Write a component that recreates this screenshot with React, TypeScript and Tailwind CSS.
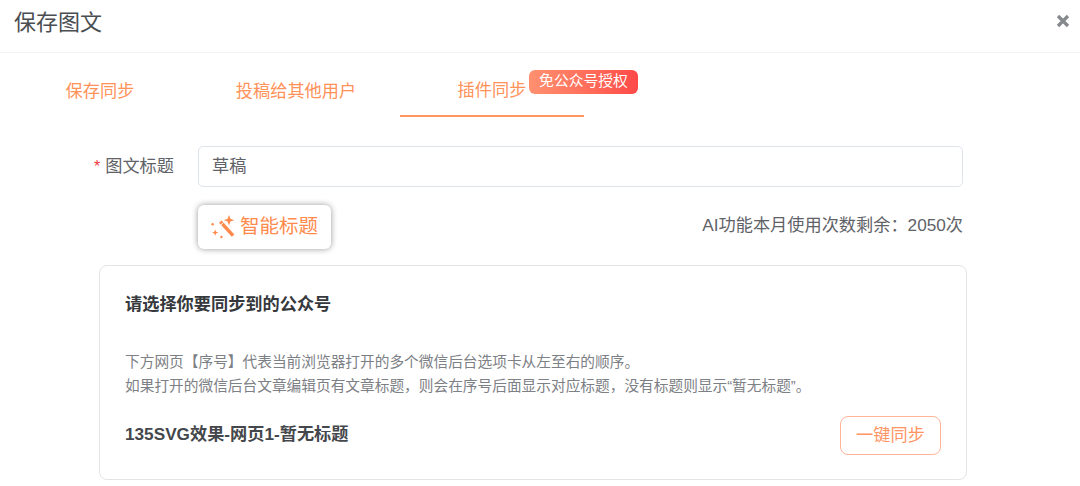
const fontStack = { fontFamily: '"Liberation Sans", "Noto Sans CJK SC", sans-serif' };

function MagicIcon() {
  return (
    <svg width="27" height="27" viewBox="0 0 27 27" fill="#ff8a4c" className="shrink-0">
      {/* wand */}
      <path d="M9 8.8 L11.6 6.4 L24.4 20.4 L21.8 22.8 Z" />
      <path d="M10.4 11.4 L13.4 8.6" stroke="#ffffff" strokeWidth="1" />
      {/* sparkles */}
      <path d="M19 1 L20.4 4.8 L24.2 6.2 L20.4 7.6 L19 11.4 L17.6 7.6 L13.8 6.2 L17.6 4.8 Z" />
      <path d="M5.2 15.5 L6.1 17.7 L8.3 18.6 L6.1 19.5 L5.2 21.7 L4.3 19.5 L2.1 18.6 L4.3 17.7 Z" />
      <circle cx="2.6" cy="10.2" r="1.2" />
      <circle cx="11.4" cy="23" r="1.2" />
    </svg>
  );
}

export default function App() {
  return (
    <div className="w-[1080px] h-[486px] overflow-hidden bg-white" style={fontStack}>
      {/* header */}
      <div className="h-[53px] flex items-center justify-between pl-[14px] pr-[10px] pb-[7px] border-b border-[#f2f3f5]">
        <h1 className="text-[22px] font-normal text-[#4a4d52]">保存图文</h1>
        <svg width="14" height="14" viewBox="0 0 14 14" stroke="#85888c" strokeWidth="3.2" className="mt-[-3px]">
          <path d="M2 2 L12 12 M12 2 L2 12" />
        </svg>
      </div>

      {/* tabs */}
      <div className="flex gap-[12px] pl-[8px] h-[64px] text-[17.2px] text-[#ff9259]">
        <div className="w-[184px] flex items-center justify-center pt-[14px]">保存同步</div>
        <div className="w-[184px] flex items-center justify-center pt-[14px]">投稿给其他用户</div>
        <div className="relative w-[184px] flex items-center justify-center pt-[14px] border-b-2 border-[#ff9460]">
          插件同步
          <span className="absolute left-[129px] top-[17px] w-[109px] h-[24px] rounded-[6px] bg-gradient-to-r from-[#ff9070] to-[#ff4848] text-white text-[14.8px] leading-[23px] text-center">
            免公众号授权
          </span>
        </div>
      </div>

      {/* title field */}
      <div className="flex items-center mt-[29px] h-[41px] pr-[117px]">
        <label className="w-[174px] shrink-0 text-right text-[17.2px] text-[#5f6368]">
          <span className="text-[#f23c3c] text-[16px] mr-[5px]">*</span>图文标题
        </label>
        <div className="ml-[24px] flex-1 h-[41px] flex items-center px-[13px] border border-[#dfe4ec] rounded-[5px] text-[17.2px] text-[#5f6368]">
          草稿
        </div>
      </div>

      {/* smart title */}
      <div className="flex items-center justify-between mt-[18px] ml-[198px] mr-[117px]">
        <button className="w-[133px] h-[44px] flex items-center pl-[12px] gap-[3px] rounded-[6px] bg-white text-[19.5px] text-[#ff8a4c] shadow-[0_0_6px_rgba(0,0,0,0.4)]">
          <MagicIcon />
          智能标题
        </button>
        <span className="pb-[3px] text-[17.2px] text-[#5f6368]">AI功能本月使用次数剩余：2050次</span>
      </div>

      {/* account card */}
      <div className="mt-[16px] ml-[99px] w-[868px] h-[215px] px-[25px] pt-[26px] border border-[#e4e4e4] rounded-[8px]">
        <h2 className="text-[17.2px] leading-[24px] font-bold text-[#35383c]">请选择你要同步到的公众号</h2>
        <p className="mt-[34px] text-[14.7px] leading-[24px] text-[#7d8085]">
          下方网页【序号】代表当前浏览器打开的多个微信后台选项卡从左至右的顺序。
          <br />
          如果打开的微信后台文章编辑页有文章标题，则会在序号后面显示对应标题，没有标题则显示“暂无标题”。
        </p>
        <div className="flex items-center justify-between mt-[18px]">
          <span className="pb-[2px] text-[17.2px] font-bold text-[#44474b]">135SVG效果-网页1-暂无标题</span>
          <button className="w-[101px] h-[39px] rounded-[8px] border border-[#ffb596] text-[17.2px] text-[#ff9563]">
            一键同步
          </button>
        </div>
      </div>
    </div>
  );
}
